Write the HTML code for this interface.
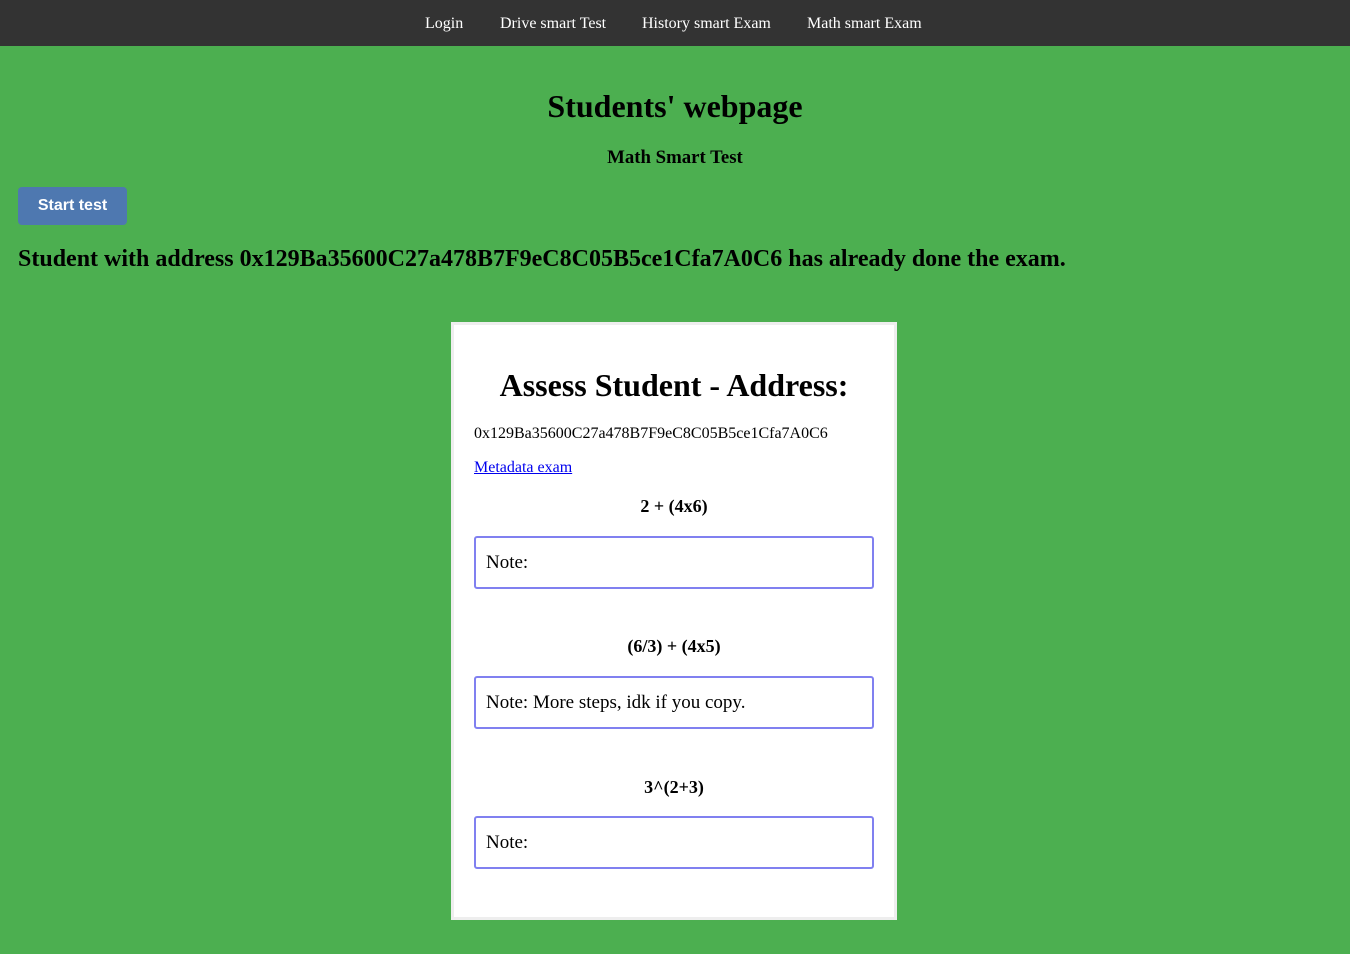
<!DOCTYPE html>
<html><head><style>
body{margin:0;width:1350px;height:954px;background:#4caf50;font-family:"Liberation Serif",serif;position:relative;overflow:hidden}
.a{position:absolute;white-space:nowrap}
nav{position:absolute;left:0;top:0;width:1350px;height:46px;background:#333}
nav span{position:absolute;top:15px;color:#fff;font-size:16px}
.c{left:0;width:1350px;text-align:center;font-weight:bold}
.card{position:absolute;left:451px;top:322px;width:440px;height:592px;background:#fff;border:3px solid #eee}
.in{position:absolute;left:20px;width:400px;height:53px;border:2px solid #8080f0;border-radius:3px;font-size:19px;box-sizing:border-box}
.in span{position:absolute;left:10px;top:14px}
.q{position:absolute;left:0;width:440px;text-align:center;font-weight:bold;font-size:18px}
</style></head><body>
<nav><span style="left:425px">Login</span><span style="left:500px">Drive smart Test</span><span style="left:642px">History smart Exam</span><span style="left:807px">Math smart Exam</span></nav>
<div class="a c" style="top:88px;font-size:32px">Students' webpage</div>
<div class="a c" style="top:147px;font-size:18.8px">Math Smart Test</div>
<div class="a" style="left:18px;top:187px;width:109px;height:38px;background:#4e78b0;border-radius:4px;color:#fff;font-family:'Liberation Sans',sans-serif;font-weight:bold;font-size:16px;text-align:center;line-height:37px">Start test</div>
<div class="a" style="left:18px;top:246px;font-size:24px;font-weight:bold">Student with address 0x129Ba35600C27a478B7F9eC8C05B5ce1Cfa7A0C6 has already done the exam.</div>
<div class="card">
<div class="q" style="top:42px;font-size:32px">Assess Student - Address:</div>
<div class="a" style="left:20px;top:100px;font-size:16px">0x129Ba35600C27a478B7F9eC8C05B5ce1Cfa7A0C6</div>
<div class="a" style="left:20px;top:134px;font-size:16px;color:#00e;text-decoration:underline">Metadata exam</div>
<div class="q" style="top:171px">2 + (4x6)</div>
<div class="in" style="top:211px"><span>Note:</span></div>
<div class="q" style="top:311px">(6/3) + (4x5)</div>
<div class="in" style="top:351px"><span>Note: More steps, idk if you copy.</span></div>
<div class="q" style="top:452px">3^(2+3)</div>
<div class="in" style="top:491px"><span>Note:</span></div>
</div>
</body></html>
